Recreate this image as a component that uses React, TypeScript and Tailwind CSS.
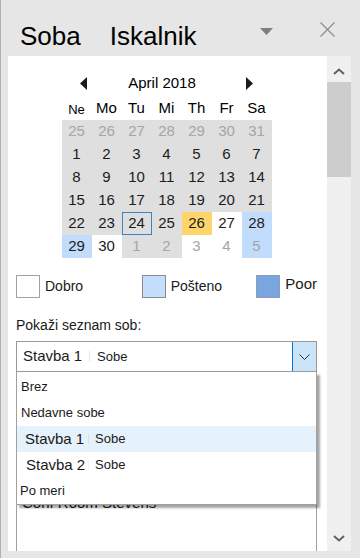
import React from "react";

type Cell = { d: number; bg: "g" | "y" | "b" | "w"; muted?: boolean; today?: boolean };

const bgClass = {
  g: "bg-[#dfdfdf]",
  y: "bg-[#fdd66b]",
  b: "bg-[#c2dcfb]",
  w: "bg-white",
};

const row = (nums: number[], bg: Cell["bg"] = "g", muted = false): Cell[] =>
  nums.map((d) => ({ d, bg, muted }));

const weeks: Cell[][] = [
  row([25, 26, 27, 28, 29, 30, 31], "g", true),
  row([1, 2, 3, 4, 5, 6, 7]),
  row([8, 9, 10, 11, 12, 13, 14]),
  row([15, 16, 17, 18, 19, 20, 21]),
  [
    { d: 22, bg: "g" },
    { d: 23, bg: "g" },
    { d: 24, bg: "g", today: true },
    { d: 25, bg: "g" },
    { d: 26, bg: "y" },
    { d: 27, bg: "w" },
    { d: 28, bg: "b" },
  ],
  [
    { d: 29, bg: "b" },
    { d: 30, bg: "w" },
    { d: 1, bg: "g", muted: true },
    { d: 2, bg: "g", muted: true },
    { d: 3, bg: "w", muted: true },
    { d: 4, bg: "w", muted: true },
    { d: 5, bg: "b", muted: true },
  ],
];

const days = ["Ne", "Mo", "Tu", "Mi", "Th", "Fr", "Sa"];

const Chevron = ({ up = false }: { up?: boolean }) => (
  <svg width="12" height="7" viewBox="0 0 12 7">
    <path
      d={up ? "M1 6 L6 1.5 L11 6" : "M1 1 L6 5.5 L11 1"}
      fill="none"
      stroke="#606060"
      strokeWidth="2"
    />
  </svg>
);

const App = () => {
  return (
    <div className="w-[360px] h-[558px] bg-[#e6e6e6] border-l border-[#b0b0b0] flex flex-col overflow-hidden font-['Liberation_Sans',Arial,sans-serif] text-[#1a1a1a]">
      {/* header */}
      <header className="h-[56px] flex items-start pl-[19px] pr-[25px]">
        <span className="pt-[21px] text-[26px] leading-[30px] text-black">Soba</span>
        <span className="mt-[34px] ml-[15px] w-px h-[9px] bg-[#cdeef2]" />
        <span className="pt-[21px] ml-[13px] text-[26px] leading-[30px] text-black">Iskalnik</span>
        <svg className="ml-auto mt-[28px]" width="13" height="7" viewBox="0 0 13 7">
          <path d="M0 0 H13 L6.5 7 Z" fill="#7f7f7f" />
        </svg>
        <svg className="ml-[47px] mt-[22px]" width="15" height="15" viewBox="0 0 15 15">
          <path d="M0.5 0.5 L14.5 14.5 M14.5 0.5 L0.5 14.5" stroke="#8a8a8a" strokeWidth="1.1" />
        </svg>
      </header>

      <div className="flex-1 flex">
        {/* white pane */}
        <div className="ml-[7px] w-[319px] bg-white flex flex-col pl-[8px] pr-[10px]">
          {/* calendar */}
          <div className="w-[210px] mx-auto">
            <div className="mt-[14px] h-[27px] flex items-center justify-between px-[18px]">
              <svg width="7" height="13" viewBox="0 0 7 13">
                <path d="M7 0 V13 L0 6.5 Z" fill="#1a1a1a" />
              </svg>
              <span className="text-[15px] mr-[9px] text-black">April 2018</span>
              <svg width="7" height="13" viewBox="0 0 7 13">
                <path d="M0 0 V13 L7 6.5 Z" fill="#1a1a1a" />
              </svg>
            </div>
            <div className="grid grid-cols-7 h-[23px] items-center text-center text-[15px] text-black">
              {days.map((d) => (
                <span key={d} className={d === "Ne" ? "text-[13px] pt-[3px]" : ""}>
                  {d}
                </span>
              ))}
            </div>
            <div className="grid grid-cols-7">
              {weeks.flat().map((c, i) => (
                <div
                  key={i}
                  className={`h-[23px] flex items-center justify-center text-[15px] ${bgClass[c.bg]} ${
                    c.muted ? "text-[#a3a6aa]" : "text-[#1c1c1c]"
                  } ${c.today ? "border border-[#3b83c6]" : ""}`}
                >
                  {c.d}
                </div>
              ))}
            </div>
          </div>

          {/* legend */}
          <div className="mt-[17px] flex items-center">
            <div className="w-[126px] flex items-center">
              <span className="w-[24px] h-[23px] border border-[#a0a0a0] bg-white" />
              <span className="ml-[5px] text-[14px]">Dobro</span>
            </div>
            <div className="w-[115px] flex items-center">
              <span className="w-[24px] h-[23px] border border-[#8c8c8c] bg-[#c5defc]" />
              <span className="ml-[5px] text-[14px]">Pošteno</span>
            </div>
            <div className="flex items-center">
              <span className="w-[24px] h-[23px] border border-[#8d9db3] bg-[#79a6e0]" />
              <span className="ml-[5px] text-[15px] -mt-[4px]">Poor</span>
            </div>
          </div>

          <p className="mt-[17px] text-[14px] leading-[20px]">Pokaži seznam sob:</p>

          {/* combobox + list */}
          <div className="relative mt-[6px] flex-1 flex flex-col">
            <div className="h-[31px] border border-[#9a9a9a] flex items-stretch">
              <div className="flex-1 flex items-center pl-[6px]">
                <span className="w-[66px] text-[15px]">Stavba 1</span>
                <span className="w-px h-[11px] bg-[#dbe9f2]" />
                <span className="ml-[7px] text-[13px]">Sobe</span>
              </div>
              <div className="w-[24px] border-l border-[#0078d7] bg-[#cce4f7] flex items-center justify-center">
                <svg width="11" height="6" viewBox="0 0 11 6">
                  <path d="M0.5 0.5 L5.5 5.5 L10.5 0.5" fill="none" stroke="#333" strokeWidth="1" />
                </svg>
              </div>
            </div>

            <div className="flex-1 border-x border-[#a0a0a0]">
              <p className="mt-[121px] pl-[5px] text-[15px] leading-[20px]">Conf Room Stevens</p>
            </div>

            {/* open dropdown */}
            <div className="absolute top-[31px] left-0 right-0 bg-white border-x border-b border-[#a0a0a0] pt-[2px] shadow-[3px_3px_2px_rgba(0,0,0,0.35)]">
              <div className="h-[26px] flex items-center pl-[4px] text-[13px]">Brez</div>
              <div className="h-[26px] flex items-center pl-[4px] text-[13px]">Nedavne sobe</div>
              <div className="h-[26px] flex items-center pl-[8px] bg-[#e5f1fb]">
                <span className="w-[63px] text-[15px]">Stavba 1</span>
                <span className="w-px h-[10px] bg-[#d5e6f0]" />
                <span className="ml-[6px] text-[13px]">Sobe</span>
              </div>
              <div className="h-[26px] flex items-center pl-[9px]">
                <span className="w-[62px] text-[15px]">Stavba 2</span>
                <span className="w-px h-[10px] bg-[#eef4f6]" />
                <span className="ml-[6px] text-[13px]">Sobe</span>
              </div>
              <div className="h-[26px] flex items-center pl-[3px] text-[13px]">Po meri</div>
            </div>
          </div>
        </div>

        {/* scrollbar */}
        <div className="w-[24px] bg-[#f0f0f0] flex flex-col">
          <div className="h-[26px] flex items-center justify-center pt-[4px]">
            <Chevron up />
          </div>
          <div className="h-[95px] bg-[#cdcdcd]" />
          <div className="flex-1" />
          <div className="h-[26px] flex items-center justify-center">
            <Chevron />
          </div>
        </div>
      </div>

      <div className="h-[7px]" />
    </div>
  );
};

export default App;
